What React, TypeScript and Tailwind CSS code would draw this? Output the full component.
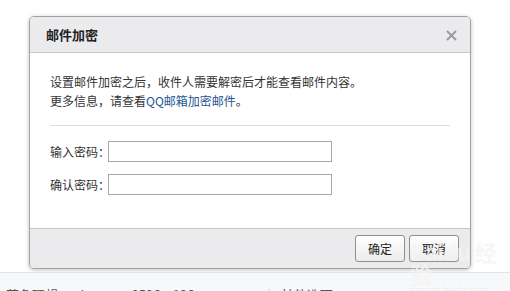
import React from "react";

// Field row: label + password input
const FieldRow: React.FC<{ label: string }> = ({ label }) => (
  <div className="flex items-center h-[21px]">
    <span className="w-[58px] shrink-0 whitespace-nowrap text-[12px] text-[#333]">{label}</span>
    <input
      type="password"
      className="w-[224px] shrink-0 h-[21px] border border-[#a8a8a8] bg-white outline-none"
    />
  </div>
);

const DialogButton: React.FC<{ children: React.ReactNode }> = ({ children }) => (
  <button className="w-[50px] h-[27px] rounded-[3px] border border-[#8f8f8f] bg-gradient-to-b from-white to-[#ececec] text-[12px] text-[#222]">
    {children}
  </button>
);

export default function App() {
  return (
    <div
      className="relative w-[510px] h-[291px] overflow-hidden bg-white flex flex-col"
      style={{ fontFamily: '"Noto Sans CJK SC", "Liberation Sans", sans-serif' }}
    >
      {/* Dialog */}
      <div className="ml-[29px] mt-[16px] w-[442px] h-[253px] shrink-0 flex flex-col rounded-[5px] border border-[#a2a2a2] bg-white shadow-[0_1px_4px_rgba(0,0,0,0.25)] overflow-hidden">
        <div className="h-[36px] flex items-center justify-between pl-[16px] pr-[13px] bg-[#ebeaec] border-b border-[#c6c6c6]">
          <span className="text-[13px] font-bold text-[#222]">邮件加密</span>
          <svg width="11" height="11" viewBox="0 0 11 11" className="mt-[1px]">
            <path d="M1 1L10 10M10 1L1 10" stroke="#9a9a9a" strokeWidth="1.8" />
          </svg>
        </div>

        <div className="flex-1 flex flex-col pl-[20px] pr-[20px] pt-[19px]">
          <p className="text-[12px] leading-[19px] text-[#333]">
            设置邮件加密之后，收件人需要解密后才能查看邮件内容。
          </p>
          <p className="text-[12px] leading-[19px] text-[#333]">
            更多信息，请查看<span className="text-[#1e5494]">QQ邮箱加密邮件</span>。
          </p>
          <div className="mt-[15px] h-px bg-[#dedede]" />
          <div className="mt-[15px] flex flex-col gap-[12px]">
            <FieldRow label="输入密码：" />
            <FieldRow label="确认密码：" />
          </div>
        </div>

        <div className="h-[40px] flex items-center justify-end gap-[4px] pr-[11px] bg-[#ebeaec] border-t border-[#c6c6c6]">
          <DialogButton>确定</DialogButton>
          <DialogButton>取消</DialogButton>
        </div>
      </div>

      {/* Page toolbar peeking below */}
      <div className="mt-[3px] flex-1 border-t border-[#e2e4e8] bg-[#f7f8fa] flex items-start pt-[15px] pl-[6px] text-[13px] text-[#555] leading-none whitespace-nowrap">
        <span>花色理想</span>
        <span className="ml-[18px]">dowa</span>
        <span className="ml-[22px]">0526@126</span>
        <span className="ml-[46px] text-[#999]">▼</span>
        <span className="ml-[14px] text-[#ccc]">|</span>
        <span className="ml-[10px]">其他选项</span>
        <span className="ml-[4px] text-[#999] text-[10px]">▴</span>
      </div>

      {/* Baidu watermark */}
      <div className="absolute left-[410px] top-[240px] text-[#f4f4f4]/80 pointer-events-none leading-none">
        <div className="text-[22px] font-bold tracking-tight">Baidu 经验</div>
        <div className="text-[9px] mt-[1px] text-[#eeeeee]">jingyan.baidu.com</div>
      </div>
    </div>
  );
}
